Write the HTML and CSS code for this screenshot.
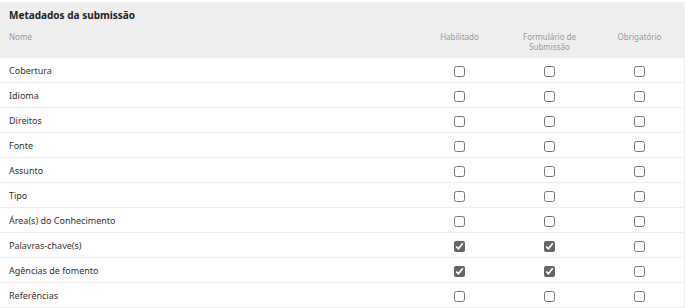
FILE: index.html
```html
<!DOCTYPE html>
<html lang="pt-BR">
<head>
    <meta charset="UTF-8">
    <title>Metadados da submissão</title>
    <link rel="stylesheet" href="styles.css">
</head>
<body>

    <div class="meta-panel">
        <div class="meta-head">
            <h2>Metadados da submissão</h2>
            <div class="meta-row head-row">
                <div class="col-name">Nome</div>
                <div class="col-check">Habilitado</div>
                <div class="col-check">Formulário de<br>Submissão</div>
                <div class="col-check">Obrigatório</div>
            </div>
        </div>

        <div class="meta-row">
            <div class="col-name">Cobertura</div>
            <div class="col-check"><input type="checkbox"></div>
            <div class="col-check"><input type="checkbox"></div>
            <div class="col-check"><input type="checkbox"></div>
        </div>
        <div class="meta-row">
            <div class="col-name">Idioma</div>
            <div class="col-check"><input type="checkbox"></div>
            <div class="col-check"><input type="checkbox"></div>
            <div class="col-check"><input type="checkbox"></div>
        </div>
        <div class="meta-row">
            <div class="col-name">Direitos</div>
            <div class="col-check"><input type="checkbox"></div>
            <div class="col-check"><input type="checkbox"></div>
            <div class="col-check"><input type="checkbox"></div>
        </div>
        <div class="meta-row">
            <div class="col-name">Fonte</div>
            <div class="col-check"><input type="checkbox"></div>
            <div class="col-check"><input type="checkbox"></div>
            <div class="col-check"><input type="checkbox"></div>
        </div>
        <div class="meta-row">
            <div class="col-name">Assunto</div>
            <div class="col-check"><input type="checkbox"></div>
            <div class="col-check"><input type="checkbox"></div>
            <div class="col-check"><input type="checkbox"></div>
        </div>
        <div class="meta-row">
            <div class="col-name">Tipo</div>
            <div class="col-check"><input type="checkbox"></div>
            <div class="col-check"><input type="checkbox"></div>
            <div class="col-check"><input type="checkbox"></div>
        </div>
        <div class="meta-row">
            <div class="col-name">Área(s) do Conhecimento</div>
            <div class="col-check"><input type="checkbox"></div>
            <div class="col-check"><input type="checkbox"></div>
            <div class="col-check"><input type="checkbox"></div>
        </div>
        <div class="meta-row">
            <div class="col-name">Palavras-chave(s)</div>
            <div class="col-check"><input type="checkbox" checked></div>
            <div class="col-check"><input type="checkbox" checked></div>
            <div class="col-check"><input type="checkbox"></div>
        </div>
        <div class="meta-row">
            <div class="col-name">Agências de fomento</div>
            <div class="col-check"><input type="checkbox" checked></div>
            <div class="col-check"><input type="checkbox" checked></div>
            <div class="col-check"><input type="checkbox"></div>
        </div>
        <div class="meta-row">
            <div class="col-name">Referências</div>
            <div class="col-check"><input type="checkbox"></div>
            <div class="col-check"><input type="checkbox"></div>
            <div class="col-check"><input type="checkbox"></div>
        </div>
    </div>

</body>
</html>
```

FILE: styles.css
```css
body {
    font-family: "Noto Sans", "Open Sans", sans-serif;
    color: #333;
    background: #fff;
    margin: 0;
    padding-top: 2px;
}

.meta-panel {
    width: 685px;
    border-right: 1px solid #f0f0f0;
    box-sizing: border-box;
}

.meta-head {
    background: #eeeeee;
    padding-bottom: 6px;
}

.meta-head h2 {
    margin: 0;
    padding: 5px 9px 0;
    font-size: 10px;
    line-height: 16px;
    font-weight: bold;
    color: #222;
}

.meta-row {
    display: grid;
    grid-template-columns: 1fr 90px 90px 90px;
    align-items: center;
    height: 24px;
    border-bottom: 1px solid #eeeeee;
    font-size: 9px;
}

.meta-head .head-row {
    height: auto;
    align-items: start;
    border-bottom: none;
    padding-top: 9px;
    font-size: 8px;
    line-height: 10px;
    color: #999;
}

.col-name {
    padding-left: 9px;
}

.col-check {
    text-align: center;
    padding-left: 1px;
}

.col-check input {
    width: 11px;
    height: 11px;
    margin: 0;
    accent-color: #666;
    vertical-align: middle;
}
```
